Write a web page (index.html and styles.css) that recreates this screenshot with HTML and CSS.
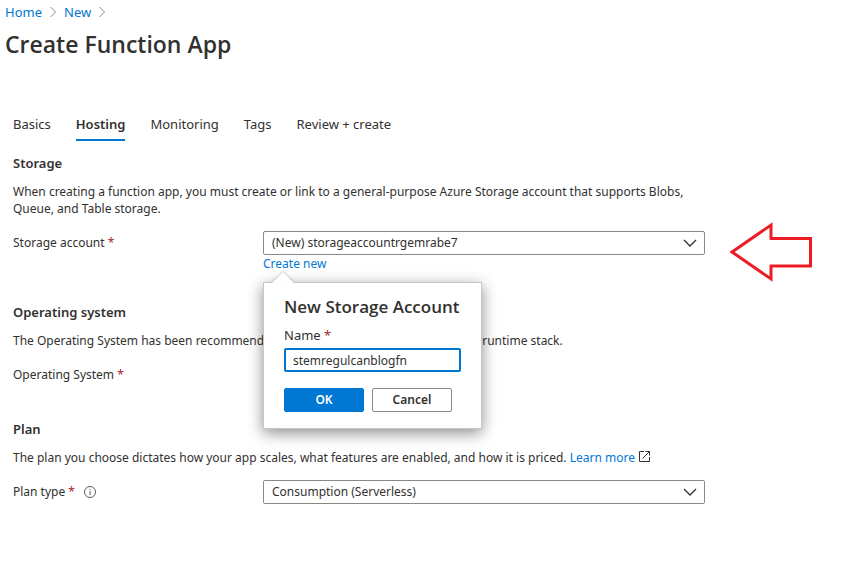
FILE: index.html
```html
<!DOCTYPE html>
<html lang="en">
<head>
    <meta charset="UTF-8">
    <meta name="viewport" content="width=device-width, initial-scale=1.0">
    <title>Create Function App</title>
    <link rel="stylesheet" href="styles.css">
</head>
<body>
    <header class="page-header">
        <nav class="breadcrumb" aria-label="Breadcrumb">
            <a href="#">Home</a>
            <svg class="crumb-arrow" width="6" height="12" viewBox="0 0 6 12"><path d="M0.5 1 L5.5 6 L0.5 11"/></svg>
            <a href="#">New</a>
            <svg class="crumb-arrow" width="6" height="12" viewBox="0 0 6 12"><path d="M0.5 1 L5.5 6 L0.5 11"/></svg>
        </nav>
        <h1>Create Function App</h1>
    </header>

    <main class="content">
        <nav class="tabs">
            <a href="#">Basics</a>
            <a href="#" class="active">Hosting</a>
            <a href="#">Monitoring</a>
            <a href="#">Tags</a>
            <a href="#">Review + create</a>
        </nav>

        <!-- Storage -->
        <section>
            <h2>Storage</h2>
            <p>When creating a function app, you must create or link to a general-purpose Azure Storage account that supports Blobs, Queue, and Table storage.</p>
            <div class="row">
                <label for="storage">Storage account <span class="required">*</span></label>
                <div class="control">
                    <div class="dropdown">
                        <select id="storage">
                            <option>(New) storageaccountrgemrabe7</option>
                        </select>
                        <svg class="chevron" width="14" height="8" viewBox="0 0 14 8"><path d="M1 1 L7 7 L13 1"/></svg>
                    </div>
                    <a href="#" class="create-link">Create new</a>

                    <form class="popover">
                        <svg class="beak" width="22" height="11" viewBox="0 0 22 11"><path d="M0 11 L11 0 L22 11 Z"/></svg>
                        <h3>New Storage Account</h3>
                        <label for="accountName">Name <span class="required">*</span></label>
                        <input type="text" id="accountName" value="stemregulcanblogfn">
                        <div class="buttons">
                            <button type="button" class="primary">OK</button>
                            <button type="button">Cancel</button>
                        </div>
                    </form>

                    <svg class="arrow" width="84" height="60" viewBox="0 0 84 60"><path d="M4 30 L43 3 V16.5 H82.5 V44 H43 V57 Z"/></svg>
                </div>
            </div>
        </section>

        <!-- Operating system -->
        <section>
            <h2>Operating system</h2>
            <p>The Operating System has been recommended for you based on your selections of runtime stack.</p>
            <div class="row">
                <span>Operating System <span class="required">*</span></span>
            </div>
        </section>

        <!-- Plan -->
        <section>
            <h2>Plan</h2>
            <p>The plan you choose dictates how your app scales, what features are enabled, and how it is priced.
                <a href="#">Learn more <svg class="external" width="11" height="11" viewBox="0 0 11 11"><path d="M5 0.5 H0.5 V10.5 H10.5 V6 M6.5 0.5 H10.5 V4.5 M10.5 0.5 L3.5 7.5"/></svg></a>
            </p>
            <div class="row">
                <label for="plan">Plan type <span class="required">*</span>
                    <svg class="info" width="12" height="12" viewBox="0 0 12 12"><circle cx="6" cy="6" r="5.5"/><path d="M6 5 V9 M6 3 V4"/></svg>
                </label>
                <div class="control">
                    <div class="dropdown">
                        <select id="plan">
                            <option>Consumption (Serverless)</option>
                        </select>
                        <svg class="chevron" width="14" height="8" viewBox="0 0 14 8"><path d="M1 1 L7 7 L13 1"/></svg>
                    </div>
                </div>
            </div>
        </section>
    </main>
</body>
</html>
```
FILE: styles.css
```css
* {
    box-sizing: border-box;
}
body {
    margin: 0;
    font-family: "Segoe UI", "Noto Sans", sans-serif;
    font-size: 12px;
    line-height: 17px;
    color: #323130;
    background-color: #fff;
}
h1, h2, h3, p {
    margin: 0;
}
h1, h3 {
    font-family: "Segoe UI", "Open Sans", sans-serif;
    font-weight: 600;
}
a {
    color: #0078d4;
    text-decoration: none;
}
svg {
    fill: none;
}
.page-header {
    padding: 3px 5px 0;
}
.breadcrumb {
    display: flex;
    align-items: center;
    gap: 8px;
    font-size: 13px;
    line-height: 18px;
}
.crumb-arrow {
    stroke: #8a8886;
}
h1 {
    margin-top: 7px;
    font-size: 23px;
    line-height: 32px;
}
.content {
    padding: 55px 13px 20px;
}
.tabs {
    display: flex;
    gap: 25px;
    margin-bottom: 13px;
    font-size: 13px;
    line-height: 18px;
}
.tabs a {
    padding-bottom: 6px;
    border-bottom: 2px solid transparent;
    color: #323130;
}
.tabs .active {
    border-bottom-color: #0078d4;
    font-weight: 600;
}
section {
    max-width: 692px;
    margin-bottom: 33px;
}
h2 {
    margin-bottom: 11px;
    font-size: 13px;
    font-weight: 600;
    line-height: 18px;
}
p {
    margin-bottom: 14px;
}
.required {
    color: #a4262c;
}
.row {
    display: grid;
    grid-template-columns: 250px 1fr;
    line-height: 24px;
}
.control {
    position: relative;
}
.dropdown {
    display: grid;
    align-items: center;
}
.dropdown select,
.chevron {
    grid-area: 1 / 1;
}
.dropdown select {
    height: 24px;
    padding: 0 8px;
    border: 1px solid #8a8886;
    border-radius: 2px;
    appearance: none;
    background-color: #fff;
    color: #323130;
    font: inherit;
    line-height: 22px;
}
.chevron {
    justify-self: end;
    margin-right: 8px;
    stroke: #323130;
    stroke-width: 1.3;
    pointer-events: none;
}
.create-link {
    display: block;
    margin-bottom: -3px;
    line-height: 18px;
}
.info {
    margin-left: 6px;
    stroke: #605e5c;
    vertical-align: -2px;
}
.external {
    margin-left: 1px;
    stroke: #323130;
}

/* New storage account popover */
.popover {
    position: absolute;
    top: 51px;
    left: 0;
    z-index: 1;
    width: 219px;
    padding: 12px 20px 16px;
    border: 1px solid #c8c6c4;
    background-color: #fff;
    box-shadow: 0 4px 14px rgba(0, 0, 0, 0.45);
    line-height: 18px;
}
.beak {
    position: absolute;
    top: -11px;
    left: 8px;
    fill: #fff;
    filter: drop-shadow(0 -1px 1px rgba(0, 0, 0, 0.2));
}
h3 {
    margin-bottom: 7px;
    font-size: 17px;
    line-height: 24px;
    white-space: nowrap;
}
.popover label {
    display: block;
    margin-bottom: 4px;
    font-size: 13px;
}
.popover input {
    display: block;
    width: 100%;
    height: 24px;
    padding: 0 7px;
    border: 2px solid #0078d4;
    border-radius: 2px;
    outline: none;
    color: #323130;
    font: inherit;
}
.buttons {
    display: flex;
    gap: 8px;
    margin-top: 16px;
}
button {
    width: 80px;
    height: 24px;
    padding: 0;
    border: 1px solid #8a8886;
    border-radius: 2px;
    background-color: #fff;
    color: #323130;
    font: inherit;
    font-weight: 600;
    cursor: pointer;
}
.primary {
    border-color: #0078d4;
    background-color: #0078d4;
    color: #fff;
}

/* Arrow pointing at the storage account */
.arrow {
    position: absolute;
    top: -9px;
    left: calc(100% + 23px);
    stroke: #ed1c24;
    stroke-width: 3;
}
```
